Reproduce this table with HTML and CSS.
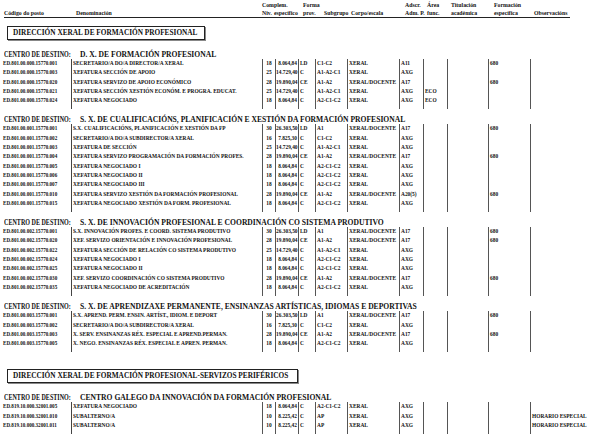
FILE: index.html
```html
<!DOCTYPE html>
<html lang="gl">
<head>
<meta charset="utf-8">
<title>Relación de postos</title>
<link rel="stylesheet" href="styles.css">
</head>
<body>
<div class="page">
  <div class="head">
    <div class="h1 c-compl">Complem.</div>
    <div class="h1 c-forma">Forma</div>
    <div class="h1 c-adscr">Adscr.</div>
    <div class="h1 c-area">Área</div>
    <div class="h1 c-titul">Titulación</div>
    <div class="h1 c-form">Formación</div>
    <div class="h2 c-code">Código do posto</div>
    <div class="h2 c-denom">Denominación</div>
    <div class="h2 c-niv">Niv.</div>
    <div class="h2 c-espec">específico</div>
    <div class="h2 c-forma">prov.</div>
    <div class="h2 c-subg">Subgrupo</div>
    <div class="h2 c-corpo">Corpo/escala</div>
    <div class="h2 c-adscr">Adm. P.</div>
    <div class="h2 c-area">func.</div>
    <div class="h2 c-titul">académica</div>
    <div class="h2 c-form">específica</div>
    <div class="h2 c-obs">Observacións</div>
  </div>

  <div class="box box-1">DIRECCIÓN XERAL DE FORMACIÓN PROFESIONAL</div>

  <section class="group">
    <h2 class="centro"><span class="lbl">CENTRO DE DESTINO:</span>D. X. DE FORMACIÓN PROFESIONAL</h2>
    <div class="rows">
      <div class="row"><span>ED.801.00.000.15770.001</span><span>SECRETARIO/A DO/A DIRECTOR/A XERAL</span><span>18</span><span>8.064,84</span><span>LD</span><span>C1-C2</span><span>XERAL</span><span>A11</span><span></span><span></span><span>680</span><span></span></div>
      <div class="row"><span>ED.801.00.000.15770.003</span><span>XEFATURA SECCIÓN DE APOIO</span><span>25</span><span>14.729,40</span><span>C</span><span>A1-A2-C1</span><span>XERAL</span><span>AXG</span><span></span><span></span><span></span><span></span></div>
      <div class="row"><span>ED.801.00.000.15770.020</span><span>XEFATURA SERVIZO DE APOIO ECONÓMICO</span><span>28</span><span>19.890,04</span><span>CE</span><span>A1-A2</span><span>XERAL/DOCENTE</span><span>A17</span><span></span><span></span><span>680</span><span></span></div>
      <div class="row"><span>ED.801.00.000.15770.021</span><span>XEFATURA SECCIÓN XESTIÓN ECONÓM. E PROGRA. EDUCAT.</span><span>25</span><span>14.729,40</span><span>C</span><span>A1-A2-C1</span><span>XERAL</span><span>AXG</span><span>ECO</span><span></span><span></span><span></span></div>
      <div class="row"><span>ED.801.00.000.15770.024</span><span>XEFATURA NEGOCIADO</span><span>18</span><span>8.064,84</span><span>C</span><span>A2-C1-C2</span><span>XERAL</span><span>AXG</span><span>ECO</span><span></span><span></span><span></span></div>
      <div class="row tail"><span></span><span></span><span></span><span></span><span></span><span></span><span></span><span></span><span></span><span></span><span></span><span></span></div>
    </div>
  </section>

  <section class="group">
    <h2 class="centro"><span class="lbl">CENTRO DE DESTINO:</span>S. X. DE CUALIFICACIÓNS, PLANIFICACIÓN E XESTIÓN DA FORMACIÓN PROFESIONAL</h2>
    <div class="rows">
      <div class="row"><span>ED.801.00.001.15770.001</span><span>S.X. CUALIFICACIÓNS, PLANIFICACIÓN E XESTIÓN DA FP</span><span>30</span><span>26.303,50</span><span>LD</span><span>A1</span><span>XERAL/DOCENTE</span><span>A17</span><span></span><span></span><span>680</span><span></span></div>
      <div class="row"><span>ED.801.00.001.15770.002</span><span>SECRETARIO/A DO/A SUBDIRECTOR/A XERAL</span><span>16</span><span>7.825,30</span><span>C</span><span>C1-C2</span><span>XERAL</span><span>AXG</span><span></span><span></span><span></span><span></span></div>
      <div class="row"><span>ED.801.00.001.15770.003</span><span>XEFATURA DE SECCIÓN</span><span>25</span><span>14.729,40</span><span>C</span><span>A1-A2-C1</span><span>XERAL</span><span>AXG</span><span></span><span></span><span></span><span></span></div>
      <div class="row"><span>ED.801.00.001.15770.004</span><span>XEFATURA SERVIZO PROGRAMACIÓN DA FORMACIÓN PROFES.</span><span>28</span><span>19.890,04</span><span>CE</span><span>A1-A2</span><span>XERAL/DOCENTE</span><span>A17</span><span></span><span></span><span>680</span><span></span></div>
      <div class="row"><span>ED.801.00.001.15770.005</span><span>XEFATURA NEGOCIADO I</span><span>18</span><span>8.064,84</span><span>C</span><span>A2-C1-C2</span><span>XERAL</span><span>AXG</span><span></span><span></span><span></span><span></span></div>
      <div class="row"><span>ED.801.00.001.15770.006</span><span>XEFATURA NEGOCIADO II</span><span>18</span><span>8.064,84</span><span>C</span><span>A2-C1-C2</span><span>XERAL</span><span>AXG</span><span></span><span></span><span></span><span></span></div>
      <div class="row"><span>ED.801.00.001.15770.007</span><span>XEFATURA NEGOCIADO III</span><span>18</span><span>8.064,84</span><span>C</span><span>A2-C1-C2</span><span>XERAL</span><span>AXG</span><span></span><span></span><span></span><span></span></div>
      <div class="row"><span>ED.801.00.001.15770.010</span><span>XEFATURA SERVIZO XESTIÓN DA FORMACIÓN PROFESIONAL</span><span>28</span><span>19.890,04</span><span>CE</span><span>A1-A2</span><span>XERAL/DOCENTE</span><span>A20(5)</span><span></span><span></span><span>680</span><span></span></div>
      <div class="row"><span>ED.801.00.001.15770.015</span><span>XEFATURA NEGOCIADO XESTIÓN DA FORM. PROFESIONAL</span><span>18</span><span>8.064,84</span><span>C</span><span>A2-C1-C2</span><span>XERAL</span><span>AXG</span><span></span><span></span><span></span><span></span></div>
      <div class="row tail"><span></span><span></span><span></span><span></span><span></span><span></span><span></span><span></span><span></span><span></span><span></span><span></span></div>
    </div>
  </section>

  <section class="group">
    <h2 class="centro"><span class="lbl">CENTRO DE DESTINO:</span>S. X. DE INNOVACIÓN PROFESIONAL E COORDINACIÓN CO SISTEMA PRODUTIVO</h2>
    <div class="rows">
      <div class="row"><span>ED.801.00.002.15770.001</span><span>S.X. INNOVACIÓN PROFES. E COORD. SISTEMA PRODUTIVO</span><span>30</span><span>26.303,50</span><span>LD</span><span>A1</span><span>XERAL/DOCENTE</span><span>A17</span><span></span><span></span><span>680</span><span></span></div>
      <div class="row"><span>ED.801.00.002.15770.020</span><span>XEF. SERVIZO ORIENTACIÓN E INNOVACIÓN PROFESIONAL</span><span>28</span><span>19.890,04</span><span>CE</span><span>A1-A2</span><span>XERAL/DOCENTE</span><span>A17</span><span></span><span></span><span>680</span><span></span></div>
      <div class="row"><span>ED.801.00.002.15770.022</span><span>XEFATURA SECCIÓN DE RELACIÓN CO SISTEMA PRODUTIVO</span><span>25</span><span>14.729,40</span><span>C</span><span>A1-A2-C1</span><span>XERAL</span><span>AXG</span><span></span><span></span><span></span><span></span></div>
      <div class="row"><span>ED.801.00.002.15770.024</span><span>XEFATURA NEGOCIADO I</span><span>18</span><span>8.064,84</span><span>C</span><span>A2-C1-C2</span><span>XERAL</span><span>AXG</span><span></span><span></span><span></span><span></span></div>
      <div class="row"><span>ED.801.00.002.15770.025</span><span>XEFATURA NEGOCIADO II</span><span>18</span><span>8.064,84</span><span>C</span><span>A2-C1-C2</span><span>XERAL</span><span>AXG</span><span></span><span></span><span></span><span></span></div>
      <div class="row"><span>ED.801.00.002.15770.030</span><span>XEF. SERVIZO COORDINACIÓN CO SISTEMA PRODUTIVO</span><span>28</span><span>19.890,04</span><span>CE</span><span>A1-A2</span><span>XERAL/DOCENTE</span><span>A17</span><span></span><span></span><span>680</span><span></span></div>
      <div class="row"><span>ED.801.00.002.15770.035</span><span>XEFATURA NEGOCIADO DE ACREDITACIÓN</span><span>18</span><span>8.064,84</span><span>C</span><span>A2-C1-C2</span><span>XERAL</span><span>AXG</span><span></span><span></span><span></span><span></span></div>
      <div class="row tail"><span></span><span></span><span></span><span></span><span></span><span></span><span></span><span></span><span></span><span></span><span></span><span></span></div>
    </div>
  </section>

  <section class="group">
    <h2 class="centro"><span class="lbl">CENTRO DE DESTINO:</span>S. X. DE APRENDIZAXE PERMANENTE, ENSINANZAS ARTÍSTICAS, IDIOMAS E DEPORTIVAS</h2>
    <div class="rows">
      <div class="row"><span>ED.801.00.003.15770.001</span><span>S.X. APREND. PERM. ENSIN. ARTÍST., IDIOM. E DEPORT</span><span>30</span><span>26.303,50</span><span>LD</span><span>A1</span><span>XERAL/DOCENTE</span><span>A17</span><span></span><span></span><span>680</span><span></span></div>
      <div class="row"><span>ED.801.00.003.15770.002</span><span>SECRETARIO/A DO/A SUBDIRECTOR/A XERAL</span><span>16</span><span>7.825,30</span><span>C</span><span>C1-C2</span><span>XERAL</span><span>AXG</span><span></span><span></span><span></span><span></span></div>
      <div class="row"><span>ED.801.00.003.15770.003</span><span>X. SERV. ENSINANZAS RÉX. ESPECIAL E APREND.PERMAN.</span><span>28</span><span>19.890,04</span><span>CE</span><span>A1-A2</span><span>XERAL/DOCENTE</span><span>A17</span><span></span><span></span><span>680</span><span></span></div>
      <div class="row"><span>ED.801.00.003.15770.005</span><span>X. NEGO. ENSINANZAS RÉX. ESPECIAL E APREN. PERMAN.</span><span>18</span><span>8.064,84</span><span>C</span><span>A2-C1-C2</span><span>XERAL</span><span>AXG</span><span></span><span></span><span></span><span></span></div>
      <div class="row tail"><span></span><span></span><span></span><span></span><span></span><span></span><span></span><span></span><span></span><span></span><span></span><span></span></div>
    </div>
  </section>

  <div class="box box-2">DIRECCIÓN XERAL DE FORMACIÓN PROFESIONAL-SERVIZOS PERIFÉRICOS</div>

  <section class="group">
    <h2 class="centro"><span class="lbl">CENTRO DE DESTINO:</span>CENTRO GALEGO DA INNOVACIÓN DA FORMACIÓN PROFESIONAL</h2>
    <div class="rows">
      <div class="row"><span>ED.819.10.000.32001.005</span><span>XEFATURA NEGOCIADO</span><span>18</span><span>8.064,84</span><span>C</span><span>A2-C1-C2</span><span>XERAL</span><span>AXG</span><span></span><span></span><span></span><span></span></div>
      <div class="row"><span>ED.819.10.000.32001.010</span><span>SUBALTERNO/A</span><span>10</span><span>8.225,42</span><span>C</span><span>AP</span><span>XERAL</span><span>AXG</span><span></span><span></span><span></span><span>HORARIO ESPECIAL</span></div>
      <div class="row"><span>ED.819.10.000.32001.011</span><span>SUBALTERNO/A</span><span>10</span><span>8.225,42</span><span>C</span><span>AP</span><span>XERAL</span><span>AXG</span><span></span><span></span><span></span><span>HORARIO ESPECIAL</span></div>
      <div class="row tail"><span></span><span></span><span></span><span></span><span></span><span></span><span></span><span></span><span></span><span></span><span></span><span></span></div>
    </div>
  </section>
</div>
</body>
</html>
```

FILE: styles.css
```css
html, body {
  margin: 0;
  padding: 0;
  background: #ffffff;
}

body {
  font-family: "Liberation Serif", "Times New Roman", serif;
  color: #111111;
}

.page {
  width: 615px;
  height: 439px;
  overflow: hidden;
}

/* ---------- column header ---------- */
.head {
  display: grid;
  grid-template-columns: 72px 186px 12px 29px 21px 27px 54px 22px 24px 43px 40px 40px;
  grid-template-rows: 8px 8px;
  margin-left: 4px;
  width: 566px;
  border-bottom: 1px solid #222;
  font-weight: bold;
  font-size: 5.8px;
  line-height: 8px;
  white-space: nowrap;
  padding-top: 1px;
}
.h1 { grid-row: 1; }
.h2 { grid-row: 2; }
.c-code { grid-column: 1; }
.c-denom { grid-column: 2; }
.c-compl { grid-column: 3 / span 2; }
.c-niv { grid-column: 3; }
.c-espec { grid-column: 4; }
.c-forma { grid-column: 5; }
.c-subg { grid-column: 6; }
.c-corpo { grid-column: 7; }
.c-adscr { grid-column: 8; }
.c-area { grid-column: 9; }
.c-titul { grid-column: 10; }
.c-form { grid-column: 11; }
.c-obs { grid-column: 12; }

/* ---------- boxed titles ---------- */
.box {
  box-sizing: border-box;
  margin: 8px 0 0 7px;
  height: 14px;
  border: 1.5px solid #222;
  box-shadow: 1px 1px 0 #888;
  padding: 0 0 0 5px;
  font-weight: bold;
  font-size: 7.3px;
  line-height: 11px;
  white-space: nowrap;
}
.box-1 { width: 198px; }
.box-2 { width: 291px; margin-top: 17px; }

/* ---------- groups ---------- */
.group {
  margin-top: 6px;
}
.box + .group { margin-top: 10px; }

.centro {
  margin: 0;
  padding-left: 4px;
  font-size: 7.6px;
  font-weight: bold;
  line-height: 9px;
  height: 9px;
  white-space: nowrap;
}
.lbl {
  display: inline-block;
  width: 76px;
  vertical-align: top;
  transform: scaleX(0.8);
  transform-origin: 0 50%;
}

.rows {
  font-size: 5.4px;
  line-height: 9.3px;
  font-weight: bold;
}

.row {
  display: grid;
  grid-template-columns: 71px 191px 13px 23px 17px 32px 52px 24px 24px 41px 42px 1fr;
  height: 9.3px;
  white-space: nowrap;
}
.row > span {
  overflow: hidden;
  border-left: 1px solid #555;
  padding-left: 1px;
}
.row > span:first-child {
  border-left: none;
  padding-left: 3px;
  font-size: 5.1px;
}
.row > span:nth-child(2) {
  border-left: 1.5px solid #444;
}
.row > span:nth-child(3) {
  text-align: center;
  padding-left: 0;
}
.row > span:nth-child(4) {
  text-align: right;
  padding-right: 1px;
  padding-left: 0;
}
.row.tail {
  height: 4px;
}
```
